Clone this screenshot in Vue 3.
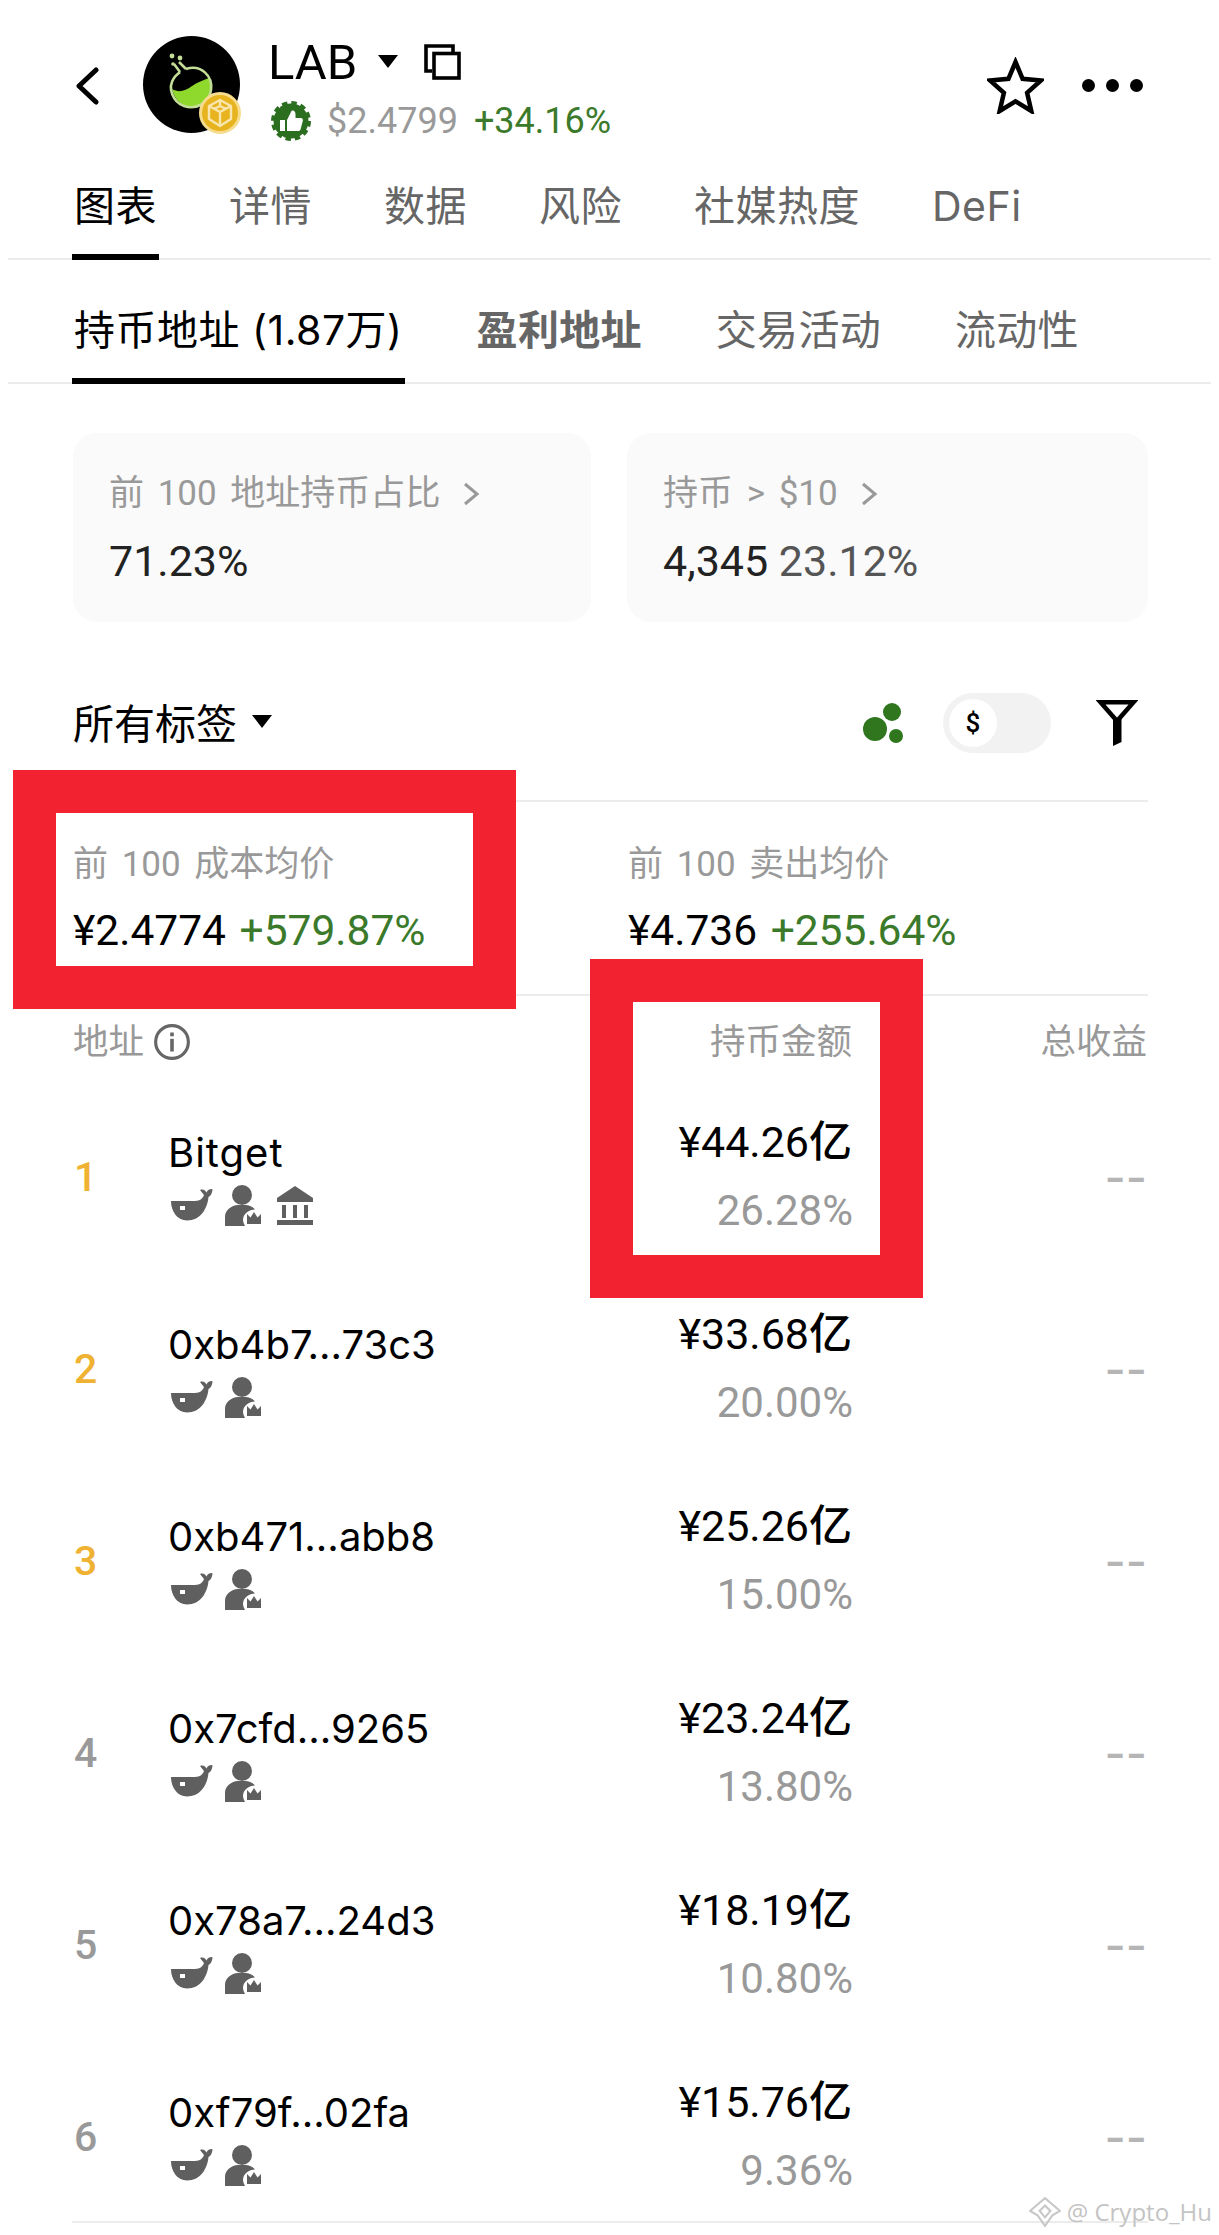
<script setup>
const mainTabs = ['图表', '详情', '数据', '风险', '社媒热度', 'DeFi']
const subTabs = ['持币地址 (1.87万)', '盈利地址', '交易活动', '流动性']

const rows = [
  { rank: 1, name: 'Bitget', amount: '¥44.26亿', pct: '26.28%', bank: true },
  { rank: 2, name: '0xb4b7...73c3', amount: '¥33.68亿', pct: '20.00%' },
  { rank: 3, name: '0xb471...abb8', amount: '¥25.26亿', pct: '15.00%' },
  { rank: 4, name: '0x7cfd...9265', amount: '¥23.24亿', pct: '13.80%' },
  { rank: 5, name: '0x78a7...24d3', amount: '¥18.19亿', pct: '10.80%' },
  { rank: 6, name: '0xf79f...02fa', amount: '¥15.76亿', pct: '9.36%' },
]
</script>

<template>
  <div class="page">
    <header class="header">
      <svg class="back" width="24" height="38" viewBox="0 0 24 38">
        <path d="M21 3 L4 19 L21 35" fill="none" stroke="#000" stroke-width="5" stroke-linecap="round" stroke-linejoin="round" />
      </svg>

      <div class="avatar">
        <svg width="97" height="97" viewBox="0 0 97 97">
          <circle cx="48.5" cy="48.5" r="48.5" fill="#000" />
          <path d="M29 53 C36 57 42 55 49 50 C55 46 61 44 66 42 C70 52 66 66 55 70 C43 74 32 66 29 53 Z" fill="#8fd82c" />
          <path d="M37 36 L31 28 M36 26 L43 33 M43 33 C58 28 70 40 68 54 C66 68 52 74 41 70 C30 66 24 52 31 42 C33 39 35 38 37 36" fill="none" stroke="#c4dd97" stroke-width="2.6" />
          <circle cx="29" cy="20" r="2.4" fill="#c4dd97" />
          <circle cx="37" cy="22" r="2.4" fill="#c4dd97" />
          <circle cx="30" cy="28" r="1.8" fill="#c4dd97" />
        </svg>
        <svg class="chain" width="42" height="42" viewBox="0 0 42 42">
          <circle cx="21" cy="21" r="19.5" fill="#e7b41f" stroke="#f6dc8c" stroke-width="3" />
          <path d="M21 8 L32 14 V27 L21 34 L10 27 V14 Z M21 8 V14 M10 14 L21 20 L32 14 M21 20 V34 M15 17 L21 14 L27 17" fill="none" stroke="#f8e6ad" stroke-width="2.4" stroke-linejoin="round" />
        </svg>
      </div>

      <div class="title">
        <div class="title-top">
          <span class="symbol">LAB</span>
          <span class="caret caret-lg"></span>
          <svg class="copy" width="37" height="36" viewBox="0 0 37 36">
            <path d="M8 27 H2 V2 H29 V9" fill="none" stroke="#000" stroke-width="3.6" />
            <rect x="10" y="9.5" width="25" height="24.5" fill="none" stroke="#000" stroke-width="3.6" />
          </svg>
        </div>
        <div class="title-bottom">
          <svg class="thumb" width="40" height="40" viewBox="0 0 40 40">
            <circle cx="20" cy="20" r="17.5" fill="#2c6e1f" />
            <circle cx="20" cy="20" r="18" fill="none" stroke="#2c6e1f" stroke-width="4" stroke-dasharray="5.4 4" />
            <rect x="9" y="19" width="5" height="11" fill="#fff" />
            <path d="M16 19 L20 11 C21 8.500 24.500 9.500 24.500 13 V17 H30 C31.500 17 32.200 18.500 31.800 20 L29.500 28.500 C29.200 29.500 28 30 27 30 H16 Z" fill="#fff" />
          </svg>
          <span class="price">$2.4799</span>
          <span class="up">+34.16%</span>
        </div>
      </div>

      <div class="header-actions">
        <svg width="57" height="57" viewBox="0 0 57 57">
          <polygon points="28.500,5 35.600,21.800 54,23.500 40.100,35.700 44.300,54 28.500,44.300 12.700,54 16.900,35.700 3,23.500 21.400,21.800" fill="none" stroke="#000" stroke-width="4.500" />
        </svg>
        <span class="dots"><i></i><i></i><i></i></span>
      </div>
    </header>

    <nav class="tabs tabs-main">
      <span v-for="(t, i) in mainTabs" :key="t" class="tab" :class="{ active: i === 0 }">{{ t }}</span>
    </nav>

    <nav class="tabs tabs-sub">
      <span v-for="(t, i) in subTabs" :key="t" class="tab" :class="{ active: i === 0, strong: i === 1 }">{{ t }}</span>
    </nav>

    <section class="cards">
      <div class="card">
        <div class="label">前 100 地址持币占比
          <svg class="chev" width="18" height="26" viewBox="0 0 18 26"><path d="M3 3 L15 13 L3 23" fill="none" stroke="#999" stroke-width="3" /></svg>
        </div>
        <div class="card-value">71.23%</div>
      </div>
      <div class="card">
        <div class="label">持币 &gt; $10
          <svg class="chev" width="18" height="26" viewBox="0 0 18 26"><path d="M3 3 L15 13 L3 23" fill="none" stroke="#999" stroke-width="3" /></svg>
        </div>
        <div class="card-value">4,345 <span class="muted">23.12%</span></div>
      </div>
    </section>

    <section class="filters">
      <div class="filter-tag">所有标签<span class="caret"></span></div>
      <div class="filter-tools">
        <svg width="40" height="40" viewBox="0 0 40 40">
          <circle cx="12" cy="26" r="12" fill="#2f761f" />
          <circle cx="29" cy="9" r="9" fill="#2f761f" />
          <circle cx="33" cy="33" r="7" fill="#2f761f" />
        </svg>
        <div class="toggle"><span class="knob">$</span></div>
        <svg class="funnel" width="42" height="46" viewBox="0 0 42 46">
          <path d="M4.500 2.300 H37.500 L21 21 Z" fill="none" stroke="#000" stroke-width="4.500" />
          <path d="M17 19 H25.500 V42 L17 46 Z" fill="#000" />
        </svg>
      </div>
    </section>

    <section class="averages">
      <div>
        <div class="label">前 100 成本均价</div>
        <div class="avg-value">¥2.4774 <span class="up">+579.87%</span></div>
      </div>
      <div>
        <div class="label">前 100 卖出均价</div>
        <div class="avg-value">¥4.736 <span class="up">+255.64%</span></div>
      </div>
    </section>

    <section class="table">
      <div class="table-head">
        <div class="head-address">地址
          <svg width="38" height="38" viewBox="0 0 36 36">
            <circle cx="18" cy="18" r="15.500" fill="none" stroke="#666" stroke-width="3" />
            <rect x="16.300" y="15" width="3.400" height="12" fill="#666" />
            <rect x="16.300" y="9" width="3.400" height="3.600" fill="#666" />
          </svg>
        </div>
        <div class="head-amount">持币金额</div>
        <div class="head-profit">总收益</div>
      </div>

      <div v-for="row in rows" :key="row.rank" class="row">
        <div class="rank" :class="{ top: row.rank <= 3 }">{{ row.rank }}</div>
        <div class="holder">
          <div class="holder-name" :class="{ named: row.bank }">{{ row.name }}</div>
          <div class="holder-tags">
            <svg width="42" height="32" viewBox="0 0 42 32">
              <path d="M0 12 H24 C29 12 32 9 33 6 L29 1 C32 0 34 1 35.500 3.500 C36.500 1 38 0 41.500 0 C41.500 4 39.500 7 37.500 8 C36.500 19 30 31.500 16 31.500 C6 31.500 0 22 0 12 Z" fill="#5f5f5f" />
              <rect x="9" y="17" width="5" height="4" fill="#fff" />
            </svg>
            <svg width="37" height="41" viewBox="0 0 37 41">
              <circle cx="17" cy="10" r="10" fill="#5f5f5f" />
              <path d="M0 41 V32 C0 25 6 21 12 20 H21 C25 20.500 28 22 30 24.500 C24 24.500 18 29 18 35 C18 37 19 39 20 41 Z" fill="#5f5f5f" />
              <path d="M22 39 V29 L25.500 32.500 L29 27 L32.500 32.500 L36 29 V39 Z" fill="#5f5f5f" />
            </svg>
            <svg v-if="row.bank" class="bank" width="36" height="39" viewBox="0 0 36 39">
              <path d="M0 12 L18 0 L36 12 V16 H0 Z" fill="#5f5f5f" />
              <rect x="5" y="19" width="4" height="13" fill="#5f5f5f" />
              <rect x="16" y="19" width="4" height="13" fill="#5f5f5f" />
              <rect x="27" y="19" width="4" height="13" fill="#5f5f5f" />
              <rect x="0" y="34" width="36" height="5" fill="#5f5f5f" />
            </svg>
          </div>
        </div>
        <div class="amount">
          <div class="amount-value">{{ row.amount }}</div>
          <div class="amount-pct">{{ row.pct }}</div>
        </div>
        <div class="profit">--</div>
      </div>
    </section>

    <!-- 截图上的红色标注框 -->
    <div class="mark mark-avg"></div>
    <div class="mark mark-amount"></div>

    <div class="watermark">
      <svg width="32" height="32" viewBox="0 0 30 30">
        <path d="M15 2 L22 8 L29 14 L22 18 L15 28 L8 18 L1 14 L8 8 Z M15 9 L20 14 L15 20 L10 14 Z" fill="none" stroke="#c8c8c8" stroke-width="2" />
      </svg>
      <span>@ Crypto_Hu</span>
    </div>
  </div>
</template>

<style scoped>
.page {
  position: relative;
  width: 1219px;
  height: 2235px;
  overflow: hidden;
  background: #fff;
  color: #000;
  font-family: Roboto, "Noto Sans CJK SC", sans-serif;
}

.header {
  display: flex;
  align-items: flex-start;
  box-sizing: border-box;
  height: 170px;
  padding: 36px 76px 0 75px;
}

.back {
  margin-top: 31px;
}

.avatar {
  position: relative;
  width: 97px;
  height: 97px;
  margin-left: 44px;
}

.chain {
  position: absolute;
  right: -1px;
  bottom: -1px;
}

.title {
  margin-left: 28px;
}

.title-top {
  display: flex;
  align-items: center;
  height: 54px;
}

.symbol {
  font-size: 49px;
  line-height: 54px;
}

.caret {
  display: inline-block;
  width: 0;
  height: 0;
  margin-left: 15px;
  border-left: 10px solid transparent;
  border-right: 10px solid transparent;
  border-top: 13px solid #000;
}

.caret-lg {
  margin-left: 21px;
  margin-top: -4px;
}

.copy {
  margin-left: 26px;
  margin-top: -2px;
}

.title-bottom {
  display: flex;
  align-items: center;
  gap: 16px;
  margin-top: 10px;
  height: 42px;
  font-size: 36px;
}

.thumb {
  margin-left: 3px;
}

.price {
  color: #999;
}

.up {
  color: #3b7a2b;
  font-weight: 400;
}

.header-actions {
  display: flex;
  align-items: center;
  gap: 38px;
  margin-left: auto;
  margin-top: 21px;
}

.dots {
  display: flex;
  gap: 11px;
}

.dots i {
  width: 13px;
  height: 13px;
  border-radius: 50%;
  background: #000;
}

.tabs {
  display: flex;
  align-items: flex-start;
  box-sizing: border-box;
  margin: 0 8px;
  padding-left: 64px;
  border-bottom: 2px solid #ececec;
}

.tab {
  box-sizing: border-box;
  padding: 0 2px;
  color: #666;
  font-family: Inter, "Noto Sans CJK SC", sans-serif;
  font-size: 41px;
  letter-spacing: 0.5px;
  line-height: 50px;
}

.tab.active {
  color: #000;
  border-bottom: 6px solid #000;
}

.tabs-main {
  gap: 68px;
  height: 90px;
}

.tabs-main .tab {
  height: 90px;
  padding-top: 11px;
}

.tabs-sub {
  gap: 70px;
  height: 124px;
}

.tabs-sub .tab {
  height: 124px;
  padding-top: 45px;
  letter-spacing: 0.3px;
}

.tabs-sub .tab.active {
  letter-spacing: 0.5px;
}

.tab.strong {
  font-weight: 700;
}

.cards {
  display: flex;
  gap: 36px;
  margin: 49px 71px 0 73px;
}

.card {
  box-sizing: border-box;
  width: 518px;
  height: 189px;
  padding: 39px 0 0 36px;
  border-radius: 24px;
  background: #fafafa;
}

.card + .card {
  width: 521px;
}

.label {
  display: flex;
  align-items: center;
  color: #999;
  font-size: 35px;
  line-height: 44px;
  word-spacing: 5px;
}

.chev {
  margin-left: 22px;
}

.card-value {
  margin-top: 22px;
  color: #222;
  font-size: 43px;
  font-weight: 450;
  line-height: 46px;
}

.muted {
  color: #555;
  font-weight: 400;
}

.filters {
  display: flex;
  align-items: center;
  justify-content: space-between;
  box-sizing: border-box;
  height: 180px;
  margin: 0 71px 0 72px;
  padding: 24px 0 0 1px;
  border-bottom: 2px solid #ececec;
}

.filter-tag {
  display: flex;
  align-items: center;
  margin-top: -4px;
  font-size: 41px;
}

.filter-tools {
  display: flex;
  align-items: center;
  margin-right: 10px;
}

.toggle {
  display: flex;
  align-items: center;
  box-sizing: border-box;
  width: 108px;
  height: 60px;
  margin-left: 40px;
  padding-left: 6px;
  border-radius: 30px;
  background: #f2f2f2;
}

.knob {
  width: 48px;
  height: 48px;
  border-radius: 50%;
  background: #fff;
  font-size: 26px;
  font-weight: 500;
  line-height: 48px;
  text-align: center;
}

.funnel {
  margin-left: 45px;
}

.averages {
  display: grid;
  grid-template-columns: 555px 1fr;
  box-sizing: border-box;
  height: 194px;
  margin: 0 71px 0 72px;
  padding: 41px 0 0 1px;
  border-bottom: 2px solid #ececec;
}

.avg-value {
  margin-top: 19px;
  font-size: 42.5px;
  font-weight: 450;
  line-height: 50px;
  word-spacing: 3px;
}

.avg-value .up {
  font-weight: 400;
}

.table {
  margin: 0 71px 0 72px;
  border-bottom: 2px solid #ececec;
}

.table-head {
  display: flex;
  align-items: flex-start;
  box-sizing: border-box;
  height: 84px;
  padding: 24px 0 0 1px;
  color: #999;
  font-size: 35.5px;
  line-height: 44px;
}

.head-address {
  display: flex;
  align-items: center;
  gap: 9px;
}

.head-amount {
  margin-left: auto;
  padding-right: 296px;
}

.head-profit {
  position: absolute;
  right: 72px;
}

.row {
  display: grid;
  grid-template-columns: 96px 1fr 200px 295px;
  height: 192px;
}

.row:last-child {
  height: 181px;
}

.rank {
  padding: 72px 0 0 2px;
  color: #999;
  font-size: 41px;
  font-weight: 500;
  line-height: 50px;
}

.rank.top {
  color: #f0b232;
}

.holder {
  padding-top: 48px;
}

.holder-name {
  font-family: Inter, "Noto Sans CJK SC", sans-serif;
  font-size: 40px;
  line-height: 50px;
}

.holder-name.named {
  letter-spacing: 1px;
}

.holder-tags {
  display: flex;
  align-items: center;
  gap: 12px;
  height: 44px;
  margin-top: 5px;
  padding-left: 3px;
}

.bank {
  margin-left: 3px;
}

.amount {
  padding-top: 37px;
  text-align: right;
}

.amount-value {
  padding-right: 1px;
  font-size: 43px;
  font-weight: 450;
  line-height: 50px;
}

.amount-pct {
  margin-top: 19px;
  color: #999;
  font-size: 42px;
  line-height: 50px;
}

.profit {
  padding: 72px 1px 0 0;
  color: #b5b5b5;
  font-family: Inter, sans-serif;
  font-size: 46px;
  font-weight: 500;
  line-height: 50px;
  text-align: right;
}

.mark {
  position: absolute;
  box-sizing: border-box;
  border: 43px solid #f22230;
}

.mark-avg {
  left: 13px;
  top: 770px;
  width: 503px;
  height: 239px;
}

.mark-amount {
  left: 590px;
  top: 959px;
  width: 333px;
  height: 339px;
}

.watermark {
  position: absolute;
  right: 7px;
  top: 2195px;
  display: flex;
  align-items: center;
  gap: 6px;
  color: #c4c4c4;
  font-family: "Open Sans", sans-serif;
  font-size: 24px;
  line-height: 34px;
}
</style>
